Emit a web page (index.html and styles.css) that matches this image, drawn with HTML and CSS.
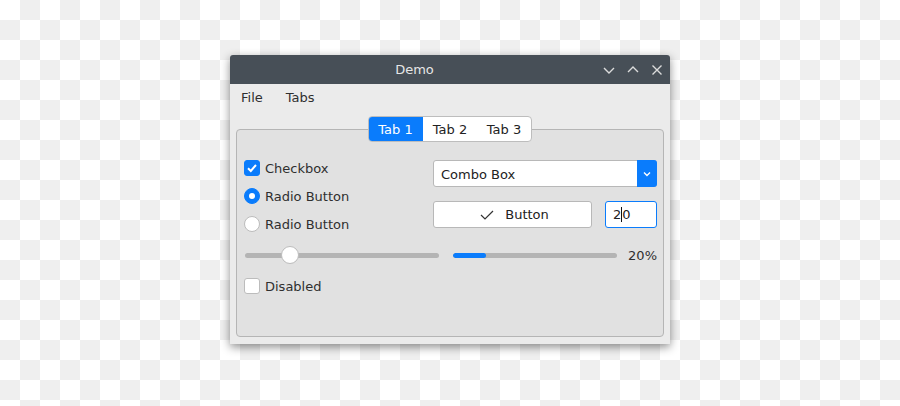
FILE: index.html
```html
<!DOCTYPE html>
<html lang="en">
<head>
<meta charset="utf-8">
<title>Demo</title>
<link rel="stylesheet" href="styles.css">
</head>
<body>
<div class="desktop">
  <div class="window">
    <header class="titlebar">
      <span class="title">Demo</span>
      <div class="wm-buttons">
        <svg class="wm-btn" viewBox="0 0 12 12" width="12" height="12"><path d="M1 4 L6 9 L11 4" /></svg>
        <svg class="wm-btn" viewBox="0 0 12 12" width="12" height="12"><path d="M1 8 L6 3 L11 8" /></svg>
        <svg class="wm-btn" viewBox="0 0 12 12" width="12" height="12"><path d="M1.5 1.5 L10.5 10.5 M10.5 1.5 L1.5 10.5" /></svg>
      </div>
    </header>
    <nav class="menubar">
      <span class="menu-item">File</span>
      <span class="menu-item">Tabs</span>
    </nav>
    <div class="tabwidget">
      <div class="tabbar">
        <span class="tab active">Tab 1</span>
        <span class="tab">Tab 2</span>
        <span class="tab">Tab 3</span>
      </div>
      <div class="frame">
        <div class="top">
          <div class="left-col">
            <label class="option">
              <span class="checkbox checked">
                <svg viewBox="0 0 16 16" width="16" height="16"><path d="M4 8.3 L6.8 11 L12 5" /></svg>
              </span>
              <span>Checkbox</span>
            </label>
            <label class="option">
              <span class="radio checked"></span>
              <span>Radio Button</span>
            </label>
            <label class="option">
              <span class="radio"></span>
              <span>Radio Button</span>
            </label>
          </div>
          <div class="right-col">
            <div class="combo">
              <span class="combo-text">Combo Box</span>
              <span class="combo-arrow">
                <svg viewBox="0 0 10 10" width="10" height="10"><path d="M2 3.5 L5 6.5 L8 3.5" /></svg>
              </span>
            </div>
            <div class="button-row">
              <div class="push-button">
                <svg viewBox="0 0 16 16" width="16" height="16"><path d="M2 8 L6 12 L14 4" /></svg>
                <span>Button</span>
              </div>
              <div class="spin"><span>2</span><span class="caret"></span><span>0</span></div>
            </div>
          </div>
        </div>
        <div class="slider-row">
          <div class="slider">
            <div class="slider-track"></div>
            <div class="slider-thumb" style="left: 23%"></div>
          </div>
          <div class="progress">
            <div class="progress-fill" style="width: 20%"></div>
          </div>
          <span class="progress-label">20%</span>
        </div>
        <label class="option disabled">
          <span class="checkbox"></span>
          <span>Disabled</span>
        </label>
      </div>
    </div>
  </div>
</div>
</body>
</html>
```
FILE: styles.css
```css
* {
  box-sizing: border-box;
}

html, body {
  margin: 0;
  padding: 0;
}

body {
  width: 900px;
  height: 406px;
  overflow: hidden;
  font-family: "DejaVu Sans", sans-serif;
  font-size: 13px;
  color: #2f2f2f;
}

/* transparent-style checkered backdrop */
.desktop {
  position: relative;
  width: 900px;
  height: 406px;
  background-color: #ffffff;
  background-image: conic-gradient(#efefef 0 25%, #ffffff 0 50%, #efefef 0 75%, #ffffff 0);
  background-size: 40px 40px;
}

.window {
  position: absolute;
  left: 230px;
  top: 55px;
  width: 440px;
  height: 289px;
  background: #ebebeb;
  border-radius: 3px 3px 0 0;
  box-shadow: 0 3px 10px rgba(0, 0, 0, 0.45);
  display: flex;
  flex-direction: column;
}

.titlebar {
  height: 29px;
  background: #474f57;
  border-radius: 3px 3px 0 0;
  display: flex;
  align-items: center;
  padding-right: 7px;
}

.title {
  flex: 1;
  text-align: center;
  color: #e6e6e6;
  padding-right: 4px;
}

.wm-buttons {
  display: flex;
  gap: 12px;
  align-items: center;
}

.wm-btn {
  fill: none;
  stroke: #dcdcdc;
  stroke-width: 1.4;
}

.menubar {
  height: 26px;
  display: flex;
  align-items: center;
  padding-left: 11px;
  gap: 23px;
  color: #2f2f2f;
}

.tabwidget {
  flex: 1;
  display: flex;
  flex-direction: column;
  padding: 6px 6px 7px 6px;
}

.tabbar {
  align-self: center;
  display: flex;
  height: 26px;
  border: 1px solid #bdbdbd;
  border-radius: 4px;
  background: #ffffff;
  overflow: hidden;
  margin-bottom: -13px;
  position: relative;
  z-index: 1;
}

.tab {
  width: 54px;
  display: flex;
  align-items: center;
  justify-content: center;
  color: #222;
}

.tab.active {
  background: #0a7cfc;
  color: #ffffff;
  margin: -1px 0 -1px -1px;
  width: 55px;
}

.frame {
  flex: 1;
  background: #e1e1e1;
  border: 1px solid #b5b5b5;
  border-radius: 4px;
  padding: 24px 6px 0 7px;
  display: flex;
  flex-direction: column;
}

.top {
  display: flex;
}

.left-col {
  flex: 1;
  display: flex;
  flex-direction: column;
}

.option {
  height: 28px;
  display: flex;
  align-items: center;
  gap: 5px;
}

.checkbox {
  width: 16px;
  height: 16px;
  border-radius: 3px;
  background: #ffffff;
  border: 1px solid #bcbcbc;
  display: flex;
}

.checkbox.checked {
  background: #0a7cfc;
  border-color: #0a7cfc;
}

.checkbox svg {
  margin: -1px;
  fill: none;
  stroke: #ffffff;
  stroke-width: 2;
}

.radio {
  width: 16px;
  height: 16px;
  border-radius: 50%;
  background: #ffffff;
  border: 1px solid #bcbcbc;
}

.radio.checked {
  background: #0a7cfc;
  border-color: #0a7cfc;
  display: flex;
  align-items: center;
  justify-content: center;
}

.radio.checked::after {
  content: "";
  width: 6px;
  height: 6px;
  border-radius: 50%;
  background: #ffffff;
}

.right-col {
  flex: 0 0 224px;
  width: 224px;
  padding-top: 6px;
  display: flex;
  flex-direction: column;
  gap: 14px;
}

.combo {
  height: 27px;
  display: flex;
  background: #ffffff;
  border: 1px solid #b8b8b8;
  border-radius: 3px;
}

.combo-text {
  flex: 1;
  display: flex;
  align-items: center;
  padding: 1px 0 0 7px;
  color: #222;
}

.combo-arrow {
  width: 20px;
  margin: -1px -1px -1px 0;
  background: #0a7cfc;
  border-radius: 0 3px 3px 0;
  display: flex;
  align-items: center;
  justify-content: center;
}

.combo-arrow svg {
  fill: none;
  stroke: #ffffff;
  stroke-width: 1.4;
}

.button-row {
  display: flex;
  justify-content: space-between;
}

.push-button {
  flex: 0 0 159px;
  width: 159px;
  height: 27px;
  background: #ffffff;
  border: 1px solid #b8b8b8;
  border-radius: 3px;
  color: #222;
  display: flex;
  align-items: center;
  justify-content: center;
  gap: 10px;
  padding-left: 3px;
}

.push-button svg {
  fill: none;
  stroke: #333;
  stroke-width: 1.2;
}

.spin {
  flex: 0 0 52px;
  width: 52px;
  height: 27px;
  background: #ffffff;
  border: 1px solid #0a7cfc;
  border-radius: 3px;
  display: flex;
  align-items: center;
  padding-left: 7px;
  color: #222;
}

.caret {
  width: 1px;
  height: 15px;
  background: #111;
}

.slider-row {
  margin-top: 7px;
  height: 20px;
  display: flex;
  align-items: center;
}

.slider {
  position: relative;
  width: 194px;
  height: 20px;
  margin-left: 1px;
  display: flex;
  align-items: center;
}

.slider-track {
  width: 100%;
  height: 5px;
  border-radius: 3px;
  background: #b4b4b4;
}

.slider-thumb {
  position: absolute;
  top: 1px;
  width: 18px;
  height: 18px;
  margin-left: -9px;
  border-radius: 50%;
  background: #ffffff;
  border: 1px solid #bcbcbc;
}

.progress {
  width: 164px;
  height: 5px;
  margin-left: 14px;
  border-radius: 3px;
  background: #b4b4b4;
  overflow: hidden;
}

.progress-fill {
  height: 100%;
  background: #0a7cfc;
  border-radius: 3px;
}

.progress-label {
  flex: 1;
  text-align: right;
}

.option.disabled {
  margin-top: 7px;
}
```
